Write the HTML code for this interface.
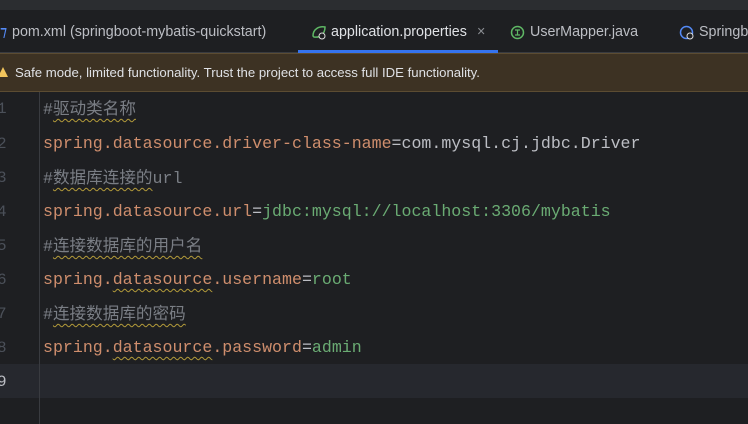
<!DOCTYPE html>
<html><head><meta charset="utf-8">
<style>
*{margin:0;padding:0;box-sizing:border-box}
body{width:748px;height:424px;overflow:hidden;background:#1e1f22;font-family:"Liberation Sans","Noto Sans CJK SC",sans-serif;position:relative}
.top{position:absolute;left:0;top:0;width:748px;height:10px;background:#2b2d30}
.tabs{position:absolute;left:0;top:10px;width:748px;height:43px;background:#1e1f22;border-bottom:1px solid #393b40}
.tab{position:absolute;top:14px;font-size:14.3px;color:#bcbec4;white-space:nowrap}
.active{position:absolute;left:298px;top:50px;width:200px;height:3px;background:#3574f0}
.banner{position:absolute;left:0;top:53px;width:748px;height:39px;background:#3d3223;border-bottom:1px solid #5c4c32;border-top:1px solid #5c4c32}
.banner span{position:absolute;left:15px;top:11px;font-size:13.2px;color:#dfe1e5}
.gut{position:absolute;left:39px;top:92px;width:1px;height:332px;background:#393b40}
.hl{position:absolute;left:0;top:364px;width:748px;height:34px;background:#26282e}
.ln{position:absolute;left:-3px;font-family:"Liberation Mono",monospace;font-size:16px;line-height:20px;color:#4b5059}
.code{position:absolute;left:43px;font-family:"Liberation Mono","Noto Sans CJK SC",monospace;font-size:16.6px;line-height:20px;white-space:pre;color:#bcbec4}
.k{color:#cf8e6d}.v{color:#6aab73}.c{color:#7a7e85}
.w{text-decoration:underline wavy #b39b3a;text-decoration-thickness:1px;text-underline-offset:4px}
</style></head><body>
<div class="top"></div>
<div class="tabs">
<div class="tab" style="left:0;color:#548af7">⁊</div>
<div class="tab" style="left:12px">pom.xml (springboot-mybatis-quickstart)</div>
<div class="tab" style="left:311px;top:14px"><svg width="16" height="16"><path d="M2 12 C2 5 8 2 14 3 C14 10 9 14 3 13Z" fill="none" stroke="#5fb865" stroke-width="1.5"/><circle cx="11" cy="12" r="3" fill="#1e1f22" stroke="#ddd" stroke-width="1"/></svg></div>
<div class="tab" style="left:331px;color:#dfe1e5">application.properties</div>
<div class="tab" style="left:477px;color:#8c8f94">×</div>
<div class="tab" style="left:510px;top:15px"><svg width="15" height="15"><circle cx="7.5" cy="7.5" r="6" fill="none" stroke="#5fb865" stroke-width="1.5"/><path d="M5 5h5M7.5 5v5M5 10h5" stroke="#5fb865" stroke-width="1.2"/></svg></div>
<div class="tab" style="left:530px">UserMapper.java</div>
<div class="tab" style="left:679px;top:15px"><svg width="16" height="16"><circle cx="7.5" cy="7.5" r="6" fill="none" stroke="#548af7" stroke-width="1.5"/><circle cx="11" cy="11" r="3" fill="#1e1f22" stroke="#ddd"/></svg></div>
<div class="tab" style="left:699px">Springboot</div>
</div>
<div class="active"></div>
<div class="banner"><svg style="position:absolute;left:-3px;top:12px" width="12" height="12"><path d="M6 1 L11 11 L1 11Z" fill="#f2c55c"/></svg><span>Safe mode, limited functionality. Trust the project to access full IDE functionality.</span></div>
<div class="hl"></div>
<div class="gut"></div>
<div class="ln" style="top:99px">1</div>
<div class="ln" style="top:134px">2</div>
<div class="ln" style="top:168px">3</div>
<div class="ln" style="top:202px">4</div>
<div class="ln" style="top:236px">5</div>
<div class="ln" style="top:270px">6</div>
<div class="ln" style="top:304px">7</div>
<div class="ln" style="top:338px">8</div>
<div class="ln" style="top:372px;color:#bcbec4">9</div>
<div class="code c" style="top:100px">#<span class="w">驱动类名称</span></div>
<div class="code" style="top:134px"><span class="k">spring.datasource.driver-class-name</span>=com.mysql.cj.jdbc.Driver</div>
<div class="code c" style="top:169px">#<span class="w">数据库连接的</span>url</div>
<div class="code" style="top:202px"><span class="k">spring.datasource.url</span>=<span class="v">jdbc:mysql://localhost:3306/mybatis</span></div>
<div class="code c" style="top:237px">#<span class="w">连接数据库的用户名</span></div>
<div class="code" style="top:270px"><span class="k">spring.<span class="w">datasource</span>.username</span>=<span class="v">root</span></div>
<div class="code c" style="top:305px">#<span class="w">连接数据库的密码</span></div>
<div class="code" style="top:338px"><span class="k">spring.<span class="w">datasource</span>.password</span>=<span class="v">admin</span></div>
</body></html>
